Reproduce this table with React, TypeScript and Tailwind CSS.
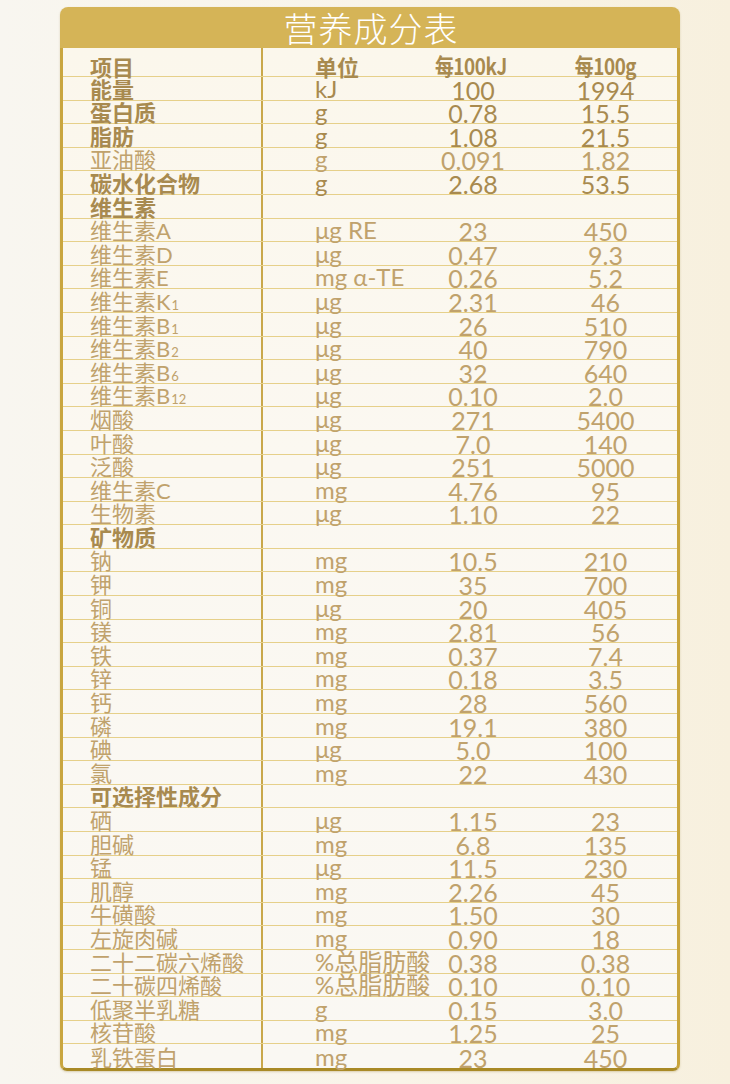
import React from "react";

type Row = {
  name: React.ReactNode;
  unit?: string;
  kj?: string;
  g?: string;
  bold?: boolean;
};

const Sub = ({ children }: { children: React.ReactNode }) => (
  <span className="text-[13px] ml-[1px]">{children}</span>
);

const rows: Row[] = [
  { name: "能量", unit: "kJ", kj: "100", g: "1994", bold: true },
  { name: "蛋白质", unit: "g", kj: "0.78", g: "15.5", bold: true },
  { name: "脂肪", unit: "g", kj: "1.08", g: "21.5", bold: true },
  { name: "亚油酸", unit: "g", kj: "0.091", g: "1.82" },
  { name: "碳水化合物", unit: "g", kj: "2.68", g: "53.5", bold: true },
  { name: "维生素", bold: true },
  { name: "维生素A", unit: "μg RE", kj: "23", g: "450" },
  { name: "维生素D", unit: "μg", kj: "0.47", g: "9.3" },
  { name: "维生素E", unit: "mg α-TE", kj: "0.26", g: "5.2" },
  { name: <>维生素K<Sub>1</Sub></>, unit: "μg", kj: "2.31", g: "46" },
  { name: <>维生素B<Sub>1</Sub></>, unit: "μg", kj: "26", g: "510" },
  { name: <>维生素B<Sub>2</Sub></>, unit: "μg", kj: "40", g: "790" },
  { name: <>维生素B<Sub>6</Sub></>, unit: "μg", kj: "32", g: "640" },
  { name: <>维生素B<Sub>12</Sub></>, unit: "μg", kj: "0.10", g: "2.0" },
  { name: "烟酸", unit: "μg", kj: "271", g: "5400" },
  { name: "叶酸", unit: "μg", kj: "7.0", g: "140" },
  { name: "泛酸", unit: "μg", kj: "251", g: "5000" },
  { name: "维生素C", unit: "mg", kj: "4.76", g: "95" },
  { name: "生物素", unit: "μg", kj: "1.10", g: "22" },
  { name: "矿物质", bold: true },
  { name: "钠", unit: "mg", kj: "10.5", g: "210" },
  { name: "钾", unit: "mg", kj: "35", g: "700" },
  { name: "铜", unit: "μg", kj: "20", g: "405" },
  { name: "镁", unit: "mg", kj: "2.81", g: "56" },
  { name: "铁", unit: "mg", kj: "0.37", g: "7.4" },
  { name: "锌", unit: "mg", kj: "0.18", g: "3.5" },
  { name: "钙", unit: "mg", kj: "28", g: "560" },
  { name: "磷", unit: "mg", kj: "19.1", g: "380" },
  { name: "碘", unit: "μg", kj: "5.0", g: "100" },
  { name: "氯", unit: "mg", kj: "22", g: "430" },
  { name: "可选择性成分", bold: true },
  { name: "硒", unit: "μg", kj: "1.15", g: "23" },
  { name: "胆碱", unit: "mg", kj: "6.8", g: "135" },
  { name: "锰", unit: "μg", kj: "11.5", g: "230" },
  { name: "肌醇", unit: "mg", kj: "2.26", g: "45" },
  { name: "牛磺酸", unit: "mg", kj: "1.50", g: "30" },
  { name: "左旋肉碱", unit: "mg", kj: "0.90", g: "18" },
  { name: "二十二碳六烯酸", unit: "%总脂肪酸", kj: "0.38", g: "0.38" },
  { name: "二十碳四烯酸", unit: "%总脂肪酸", kj: "0.10", g: "0.10" },
  { name: "低聚半乳糖", unit: "g", kj: "0.15", g: "3.0" },
  { name: "核苷酸", unit: "mg", kj: "1.25", g: "25" },
  { name: "乳铁蛋白", unit: "mg", kj: "23", g: "450" },
];

const font = { fontFamily: '"Lato", "Noto Sans CJK SC", sans-serif' };
const cjk = { fontFamily: '"Noto Sans CJK SC", sans-serif' };

export default function App() {
  return (
    <div
      className="w-[730px] h-[1084px] overflow-hidden bg-[linear-gradient(90deg,#f8f6f0_0%,#f9f4e8_55%,#f7f0de_100%)] pt-[7px] pl-[60px]"
      style={font}
    >
      <div className="w-[620px] rounded-t-[8px] rounded-b-[7px] shadow-[0_1px_2px_rgba(150,120,40,0.3)]">
        <div className="h-[41px] rounded-t-[8px] bg-[#d5b457] flex items-center justify-center">
          <span
            className="text-white text-[34px] leading-none tracking-[1px] translate-x-[1px]"
            style={{ ...cjk, fontWeight: 300 }}
          >
            营养成分表
          </span>
        </div>
        <div className="border-l-[3px] border-r-[3px] border-b-[3px] border-l-[#c9a640] border-r-[#c8a43c] border-b-[#a98a26] rounded-b-[7px] bg-[linear-gradient(180deg,#fbf7ec_0%,#fbf8f1_40%,#faf8f3_100%)]">
          <div className="flex h-[29px] border-b border-[#e6d08a] text-[#a88a4f]">
            <div className="w-[200px] border-r-2 border-[#c9a84b] pl-[27px] flex items-end">
              <span className="text-[22px] leading-none font-bold translate-y-[1px]" style={cjk}>
                项目
              </span>
            </div>
            <div className="w-[145px] pl-[52px] flex items-end">
              <span className="text-[22px] leading-none font-bold translate-y-[1px]" style={cjk}>
                单位
              </span>
            </div>
            <div className="w-[130px] flex items-end justify-center">
              <span
                className="text-[23px] leading-none font-bold translate-y-[1px] translate-x-[-2px] scale-x-[0.82] tracking-[-0.5px]"
                style={cjk}
              >
                每100kJ
              </span>
            </div>
            <div className="flex-1 flex items-end justify-center">
              <span
                className="text-[23px] leading-none font-bold translate-y-[1px] translate-x-[-2px] scale-x-[0.82] tracking-[-0.5px]"
                style={cjk}
              >
                每100g
              </span>
            </div>
          </div>
          {rows.map((r, i) => (
            <div
              key={i}
              className={`flex h-[23.6px] ${i < rows.length - 1 ? "border-b border-[#e6d08a]" : ""} ${
                r.bold ? "text-[#a88a4f]" : "text-[#c0a26c]"
              }`}
            >
              <div className="w-[200px] border-r-2 border-[#c9a84b] pl-[27px] flex items-end">
                <span
                  className={`text-[22px] leading-none whitespace-nowrap translate-y-[1px] ${r.bold ? "font-bold" : ""}`}
                >
                  {r.name}
                </span>
              </div>
              <div className="w-[145px] pl-[52px] flex items-end">
                <span className="text-[24px] leading-none whitespace-nowrap translate-y-[1px]">{r.unit}</span>
              </div>
              <div className="w-[130px] flex items-end justify-center">
                <span className="text-[25px] leading-none translate-y-[3px]">{r.kj}</span>
              </div>
              <div className="flex-1 flex items-end justify-center">
                <span className="text-[25px] leading-none translate-y-[3px] translate-x-[-2px]">{r.g}</span>
              </div>
            </div>
          ))}
        </div>
      </div>
    </div>
  );
}
